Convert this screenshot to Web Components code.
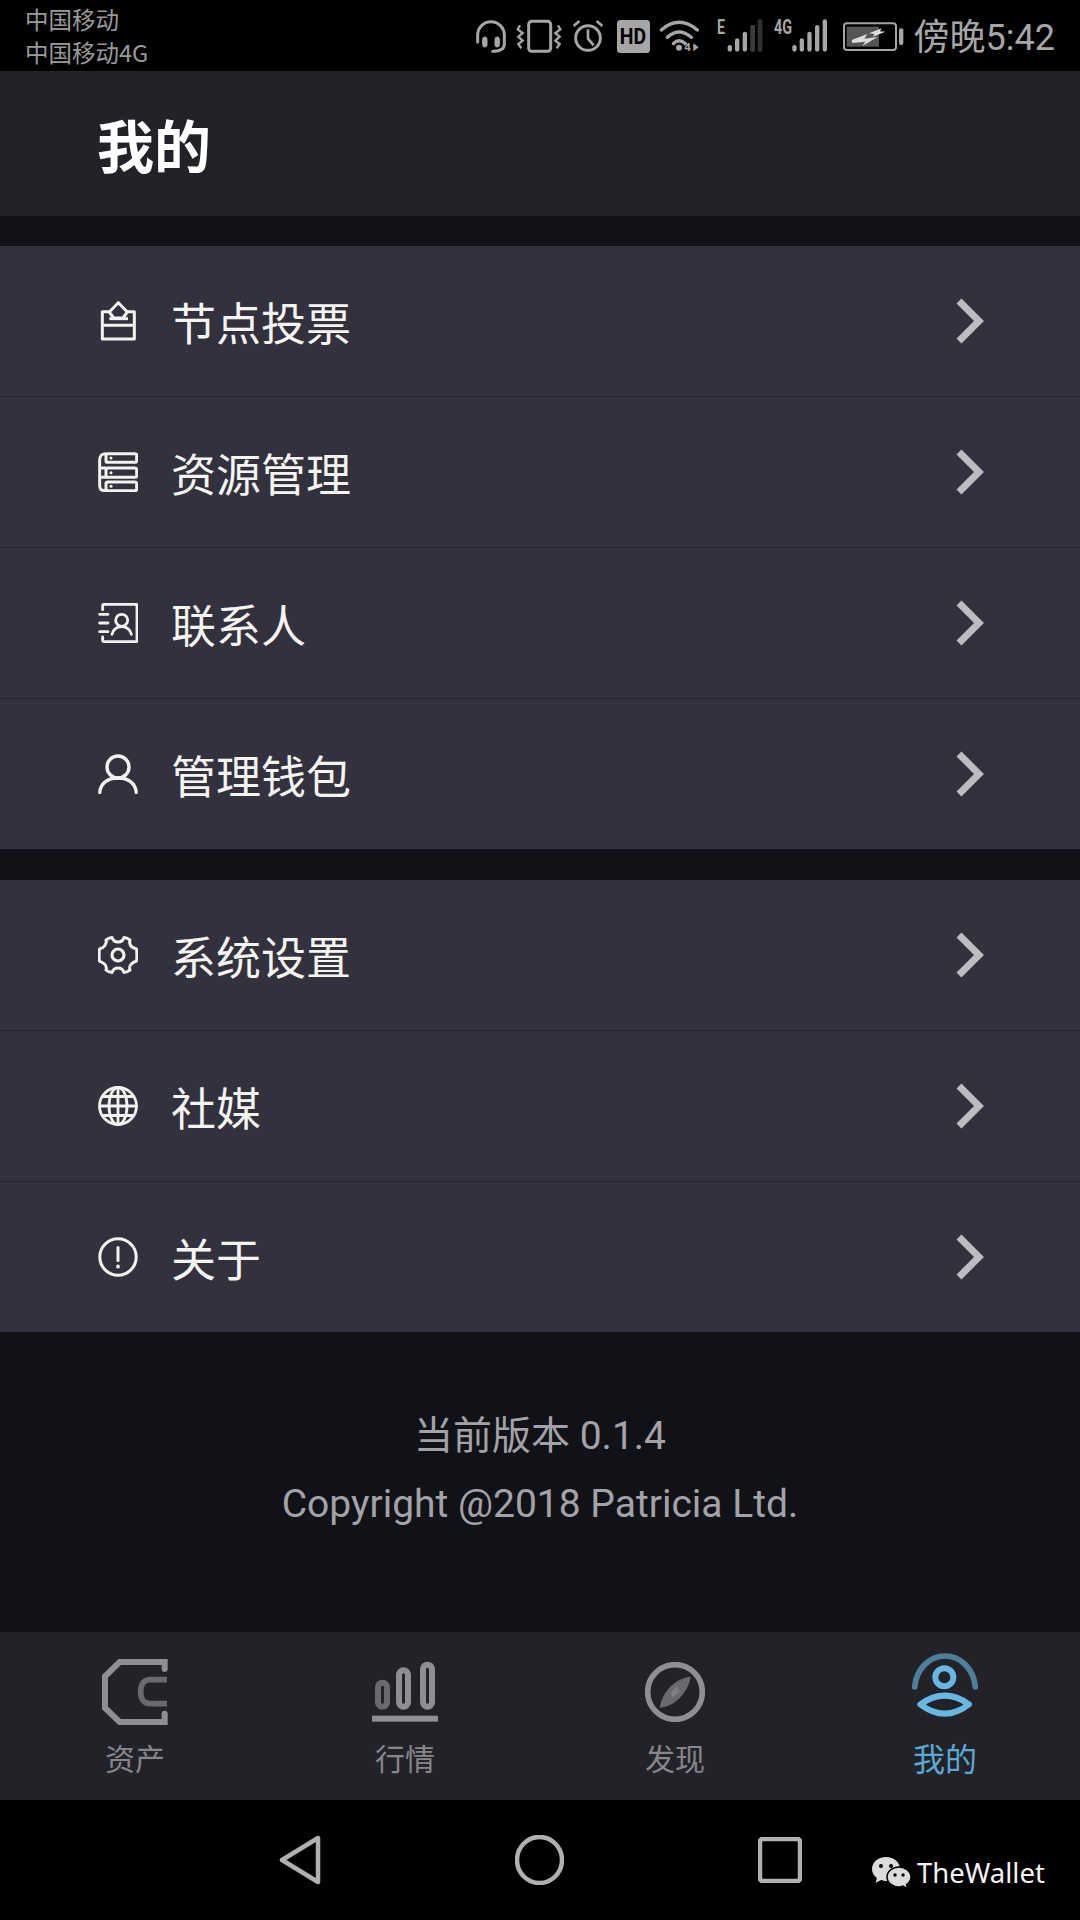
<!DOCTYPE html>
<html lang="zh-CN">
<head>
<meta charset="utf-8">
<title>我的</title>
<style>
html,body{margin:0;padding:0;background:#111118;}
body{width:1080px;height:1920px;font-family:"Noto Sans CJK SC","Noto Sans",sans-serif;overflow:hidden;}
app-screen{height:1920px;}
</style>
</head>
<body>
<app-screen>
  <status-bar></status-bar>
  <page-title>我的</page-title>
  <menu-group>
    <menu-item icon="ballot">节点投票</menu-item>
    <menu-item icon="server">资源管理</menu-item>
    <menu-item icon="contacts">联系人</menu-item>
    <menu-item icon="person" last>管理钱包</menu-item>
  </menu-group>
  <menu-group second>
    <menu-item icon="gear">系统设置</menu-item>
    <menu-item icon="globe">社媒</menu-item>
    <menu-item icon="info" last>关于</menu-item>
  </menu-group>
  <version-info>
    <span>当前版本 0.1.4</span>
    <span>Copyright @2018 Patricia Ltd.</span>
  </version-info>
  <tab-bar>
    <tab-item icon="wallet">资产</tab-item>
    <tab-item icon="chart">行情</tab-item>
    <tab-item icon="compass">发现</tab-item>
    <tab-item icon="mine" active>我的</tab-item>
  </tab-bar>
  <nav-bar></nav-bar>
</app-screen>
<script>
const FONT_CJK = '"Noto Sans CJK SC","Noto Sans",sans-serif';
const G='#8e8e93', GD='#69696e', B='#66b8e2', BD='#4d7f9b', W='#f2f2ee';

const MENU_ICONS = {
  ballot:`<svg width="40" height="40" viewBox="54 67 120 120" fill="none" stroke="${W}" stroke-width="9" stroke-linejoin="round"><path d="M90 99H67V181H163V99H140"/><path d="M67 140H163"/><path d="M115 72L142 100 129 118H101L88 100Z"/><path d="M88 120H144"/></svg>`,
  server:`<svg width="40" height="40" viewBox="54 517 120 120" fill="none" stroke="${W}" stroke-width="9" stroke-linejoin="round"><rect x="78" y="522" width="92" height="26" rx="5"/><rect x="78" y="565" width="92" height="28" rx="5"/><rect x="78" y="607" width="92" height="26" rx="5"/><path d="M78 522C62 522 59 530 59 542V616C59 628 62 633 78 633M59 565H78M59 593H78"/><circle cx="93" cy="535" r="4.500" fill="${W}" stroke="none"/><circle cx="93" cy="579" r="4.500" fill="${W}" stroke="none"/><circle cx="93" cy="620" r="4.500" fill="${W}" stroke="none"/></svg>`,
  contacts:`<svg width="40" height="40" viewBox="54 70 120 120" fill="none" stroke="${W}" stroke-width="8.500" stroke-linecap="round" stroke-linejoin="round"><path d="M68 90V78C68 75 70 74 72 74H168C170 74 171 75 171 78V182C171 185 170 186 168 186H72C70 186 68 185 68 182V172"/><path d="M59 104H84M59 130H84M59 156H84"/><circle cx="125" cy="122" r="18"/><path d="M96 164C100 149 112 141 125 141S150 149 154 164"/></svg>`,
  person:`<svg width="40" height="40" viewBox="0 0 40 40" fill="none" stroke="${W}" stroke-width="3.400" stroke-linecap="round"><circle cx="20" cy="13" r="11"/><path d="M1.800 38.500C2.500 29 10 24 20 24S37.500 29 38.200 38.500"/></svg>`,
  gear:`<svg width="40" height="40" viewBox="0 0 40 40" fill="none" stroke="${W}" stroke-width="3" stroke-linejoin="round"><path d="M14 2.500C15 6 17 7 20 7S25 6 26 2.500C27.500 2.500 30 3.500 32 5C31 8.500 32 10.500 34 12S37 13 38.500 14C39 16 39 24 38.500 26C35.500 27 34.500 27.500 33 29.500S31 32 32 35C30 36.500 27.500 37.500 26 37.500C25 34 23 33 20 33S15 34 14 37.500C12.500 37.500 10 36.500 8 35C9 32 8 30.500 6.500 29S3 27 1.500 26C1 24 1 16 1.500 14C4.500 13 5.500 12.500 6.500 11S9 8 8 5C10 3.500 12.500 2.500 14 2.500Z"/><circle cx="20" cy="20" r="6" stroke-width="3.200"/></svg>`,
  globe:`<svg width="40" height="40" viewBox="0 0 40 40" fill="none" stroke="${W}" stroke-width="2.800"><circle cx="20" cy="20" r="18.500"/><ellipse cx="20" cy="20" rx="9" ry="18.500"/><path d="M20 1.500V38.500M1.500 20H38.500M4.500 10.500H35.500M4.500 29.500H35.500"/></svg>`,
  info:`<svg width="40" height="40" viewBox="0 0 40 40" fill="none" stroke="${W}" stroke-width="3" stroke-linecap="round"><circle cx="20" cy="20" r="18.200"/><path d="M20 10.500V23.500"/><circle cx="20" cy="29.500" r="2" fill="${W}" stroke="none"/></svg>`
};

const TAB_ICONS = {
  wallet:`<svg width="66" height="66" viewBox="127 88 198 198" fill="none"><path d="M315 118V97H180L136 140V235L180 277H315V252" stroke="${G}" stroke-width="18" stroke-linecap="round"/><path d="M322 150H272C252 150 243 165 243 186S252 222 272 222H322" stroke="${GD}" stroke-width="17"/></svg>`,
  chart:`<svg width="66" height="66" viewBox="936 88 198 198" fill="none"><rect x="954" y="159" width="27" height="72" rx="13.500" stroke="${GD}" stroke-width="18"/><rect x="1017" y="122" width="27" height="109" rx="13.500" stroke="${G}" stroke-width="18"/><rect x="1089" y="105" width="27" height="126" rx="13.500" stroke="${G}" stroke-width="18"/><rect x="936" y="258" width="198" height="18" fill="${G}"/></svg>`,
  compass:`<svg width="60" height="60" viewBox="135 95 180 180" fill="none"><circle cx="225" cy="185" r="82" stroke="${G}" stroke-width="17"/><path d="M272 139C234 142 188 176 179 232C220 230 264 190 272 139Z" fill="${GD}"/><path d="M232 168L239 184 218 202 211 186Z" fill="#7d7d82"/></svg>`,
  mine:`<svg width="66" height="64" viewBox="937 68 198 192" fill="none"><path d="M945 170C950 115 990 77 1036 77S1122 115 1127 170" stroke="${BD}" stroke-width="17" stroke-linecap="round"/><circle cx="1034" cy="141" r="27" stroke="${B}" stroke-width="18"/><path d="M962 222Q1035 170 1108 222Q1035 278 962 222Z" stroke="${B}" stroke-width="18" stroke-linejoin="round"/></svg>`
};

function sheet(css, html){ return `<style>${css}</style>${html}`; }

class AppScreen extends HTMLElement{
  constructor(){super();this.attachShadow({mode:'open'}).innerHTML=sheet(
    `:host{display:flex;flex-direction:column;width:1080px;background:#111118;}`,`<slot></slot>`);}
}

class StatusBar extends HTMLElement{
  constructor(){super();
    const s='#a6a6a6';
    this.attachShadow({mode:'open'}).innerHTML=sheet(`
      :host{display:flex;justify-content:space-between;align-items:flex-start;height:71px;background:#000;color:${s};padding:0 25px;box-sizing:border-box;flex:none;}
      .carrier{display:flex;flex-direction:column;font:23.500px/33px ${FONT_CJK};padding-top:3px;color:#9a9a9a;}
      .right{display:flex;align-items:flex-start;padding-top:10px;}
      svg{display:block;flex:none;}
      svg text{font-family:"Roboto","Liberation Sans",sans-serif;font-weight:700;}
      .hd{display:flex;align-items:center;justify-content:center;flex:none;width:33px;height:33px;margin:10px 0 0 12px;border-radius:3.500px;background:${s};color:#000;font:700 22px/33px "Roboto","Liberation Sans",sans-serif;}
      .hd span{display:block;transform:scaleX(.88);}
      .time{font:36px/38px "Roboto",${FONT_CJK};color:${s};margin:9px 0 0 9px;white-space:nowrap;}
    `,`
      <div class="carrier"><span>中国移动</span><span>中国移动4G</span></div>
      <div class="right">
        <svg width="34" height="45" viewBox="30 0 102 135" fill="none" stroke="${s}" stroke-width="9"><path d="M41 96V75A40 40 0 0 1 121 75V102C121 118 108 124 86 124" stroke-linecap="round"/><rect x="56" y="81" width="13" height="30" rx="6.500" fill="${s}" stroke-width="3"/><rect x="93" y="81" width="13" height="30" rx="6.500" fill="${s}" stroke-width="3"/></svg>
        <svg style="margin-left:8px" width="46" height="45" viewBox="156 0 138 135" fill="none" stroke="${s}" stroke-width="9"><rect x="194" y="34" width="66" height="90" rx="9"/><path d="M168 46L161 58 176 69 163 80 176 92 163 102 172 115M282 46L289 58 274 69 287 80 274 92 287 102 278 115" stroke-width="7"/></svg>
        <svg style="margin-left:9px" width="34" height="45" viewBox="321 0 102 135" fill="none" stroke="${s}" stroke-width="9"><circle cx="372" cy="84" r="37"/><path d="M372 58V86L389 106" stroke-width="8"/><path d="M329 48L346 33M415 48L398 33" stroke-width="8"/></svg>
        <div class="hd"><span>HD</span></div>
        <svg style="margin-left:9px" width="41" height="45" viewBox="585 0 123 135" fill="none" stroke="${s}" stroke-width="10" stroke-linecap="round"><path d="M592 60Q645 14 700 60"/><path d="M610 82Q645 50 682 82"/><path d="M628 101Q645 84 664 101"/><circle cx="645" cy="113" r="9" fill="${s}" stroke="none"/><text x="661" y="124" font-size="34" fill="${s}" stroke="none">4</text><path d="M688 100V124L704 112Z" fill="${s}" stroke="none"/></svg>
        <svg style="margin-left:16px" width="47" height="45" viewBox="50 0 141 135"><text x="53" y="72" font-size="59" textLength="24" lengthAdjust="spacingAndGlyphs" fill="${s}">E</text><rect x="85" y="105" width="13" height="20" rx="6.500" fill="${s}"/><rect x="107" y="85" width="13" height="40" rx="6.500" fill="${s}"/><rect x="130" y="65" width="13" height="60" rx="6.500" fill="${s}"/><rect x="153" y="45" width="14" height="80" rx="4" fill="#3c3c3c"/><rect x="175" y="28" width="14" height="97" rx="4" fill="#303030"/></svg>
        <svg style="margin-left:10px" width="55" height="45" viewBox="222 0 165 135"><text x="225" y="72" font-size="59" textLength="54" lengthAdjust="spacingAndGlyphs" fill="${s}">4G</text><rect x="280" y="105" width="13" height="20" rx="6.500" fill="${s}"/><rect x="302" y="85" width="13" height="40" rx="6.500" fill="${s}"/><rect x="325" y="65" width="13" height="60" rx="6.500" fill="${s}"/><rect x="348" y="45" width="13" height="80" rx="6.500" fill="${s}"/><rect x="371" y="28" width="13" height="97" rx="6.500" fill="${s}"/></svg>
        <svg style="margin-left:14px" width="63" height="45" viewBox="429 0 189 135" fill="none"><rect x="435" y="40" width="156" height="80" rx="9" stroke="${s}" stroke-width="6"/><rect x="443" y="50" width="97" height="60" fill="#555"/><path d="M458 90L505 72 496 86 536 81 490 108 499 95 460 99Z" fill="#dcdcdc"/><path d="M510 70L548 55 543 64 559 65 522 80 526 72Z" fill="#dcdcdc"/><rect x="600" y="55" width="13" height="50" rx="6" fill="${s}"/></svg>
        <span class="time">傍晚5:42</span>
      </div>`);}
}

class PageTitle extends HTMLElement{
  constructor(){super();this.attachShadow({mode:'open'}).innerHTML=sheet(`
    :host{display:flex;align-items:center;height:145px;flex:none;box-sizing:border-box;padding-left:97px;background:#222228;color:#fff;font:700 57px/1 ${FONT_CJK};}
  `,`<slot></slot>`);}
}

class MenuGroup extends HTMLElement{
  constructor(){super();
    const second=this.hasAttribute('second');
    this.attachShadow({mode:'open'}).innerHTML=sheet(`
    :host{display:flex;flex-direction:column;flex:none;margin-top:${second?31:30}px;background:#32313d;}
  `,`<slot></slot>`);}
}

class MenuItem extends HTMLElement{
  constructor(){super();
    const icon=MENU_ICONS[this.getAttribute('icon')]||'';
    const last=this.hasAttribute('last');
    this.attachShadow({mode:'open'}).innerHTML=sheet(`
      :host{display:flex;align-items:center;height:${last?150:151}px;box-sizing:border-box;${last?'':'border-bottom:1px solid #25252d;'}padding:0 95px 0 98px;color:#f4f4f0;font:45px/1 ${FONT_CJK};}
      .ic{display:flex;width:40px;height:40px;flex:none;margin-right:33px;}
      .label{flex:1;}
      .chev{display:block;flex:none;}
    `,`<span class="ic">${icon}</span><span class="label"><slot></slot></span>
      <svg class="chev" width="30" height="48" viewBox="0 0 30 48" fill="none"><path d="M4 4L24 24 4 44" stroke="#bcbcc1" stroke-width="7"/></svg>`);}
}

class VersionInfo extends HTMLElement{
  constructor(){super();this.attachShadow({mode:'open'}).innerHTML=sheet(`
    :host{display:flex;flex-direction:column;align-items:center;justify-content:center;flex:none;height:300px;box-sizing:border-box;padding-bottom:24px;color:#a3a3a7;font:39px/68px "Roboto",${FONT_CJK};}
    ::slotted(span){display:block;white-space:nowrap;}
  `,`<slot></slot>`);}
}

class TabBar extends HTMLElement{
  constructor(){super();this.attachShadow({mode:'open'}).innerHTML=sheet(`
    :host{display:grid;grid-template-columns:repeat(4,270px);height:168px;flex:none;background:#222228;}
  `,`<slot></slot>`);}
}

class TabItem extends HTMLElement{
  constructor(){super();
    const name=this.getAttribute('icon');
    const active=this.hasAttribute('active');
    this.attachShadow({mode:'open'}).innerHTML=sheet(`
      :host{display:flex;flex-direction:column;align-items:center;color:${active?'#5aa9d3':'#86868b'};font:${active?32:30}px/1 ${FONT_CJK};}
      .ic{display:flex;align-items:${active?'flex-start':'center'};justify-content:center;height:66px;margin-top:${active?21:27}px;}
      .t{margin-top:${active?22:17}px;}
    `,`<span class="ic">${TAB_ICONS[name]||''}</span><span class="t"><slot></slot></span>`);}
}

class NavBar extends HTMLElement{
  constructor(){super();
    const c='#b0b0b0';
    this.attachShadow({mode:'open'}).innerHTML=sheet(`
      :host{position:relative;display:flex;align-items:center;justify-content:center;gap:194px;height:120px;flex:none;background:#000;}
      svg{display:block;flex:none;}
      .mark{position:absolute;left:871px;top:56px;display:flex;align-items:center;gap:5px;color:#f2f2f2;font:27.500px/34px "Noto Sans","Open Sans",sans-serif;}
    `,`
      <svg width="42" height="50" viewBox="0 0 42 50" fill="none"><path d="M39 3V47L3 25Z" stroke="${c}" stroke-width="4.500" stroke-linejoin="round"/></svg>
      <svg width="49" height="50" viewBox="0 0 49 50" fill="none"><ellipse cx="24.500" cy="25" rx="22.500" ry="23" stroke="${c}" stroke-width="4.500"/></svg>
      <svg width="44" height="46" viewBox="0 0 44 46" fill="none"><rect x="2" y="2" width="40" height="42" rx="2.500" stroke="${c}" stroke-width="4.500"/></svg>
      <div class="mark">
        <svg width="41" height="34" viewBox="0 0 41 34"><path d="M15 1C7 1 1 6.500 1 13C1 17 3 20 6 22L4.500 27L10 24C12 24.500 13.500 25 15 25C23 25 29 19.500 29 13S23 1 15 1Z" fill="#dcdcdc"/><circle cx="10" cy="10" r="2" fill="#000"/><circle cx="20" cy="10" r="2" fill="#000"/><path d="M28 11C21.500 11 16 15.500 16 21S21.500 31 28 31C29.500 31 31 30.500 32 30L37 33L35.500 28.500C38.500 26.500 40 24 40 21C40 15.500 34.500 11 28 11Z" fill="#dcdcdc" stroke="#000" stroke-width="1.500"/><circle cx="24" cy="19" r="1.700" fill="#000"/><circle cx="32" cy="19" r="1.700" fill="#000"/></svg>
        <span>TheWallet</span>
      </div>`);}
}

customElements.define('app-screen',AppScreen);
customElements.define('status-bar',StatusBar);
customElements.define('page-title',PageTitle);
customElements.define('menu-group',MenuGroup);
customElements.define('menu-item',MenuItem);
customElements.define('version-info',VersionInfo);
customElements.define('tab-bar',TabBar);
customElements.define('tab-item',TabItem);
customElements.define('nav-bar',NavBar);
</script>
</body>
</html>
